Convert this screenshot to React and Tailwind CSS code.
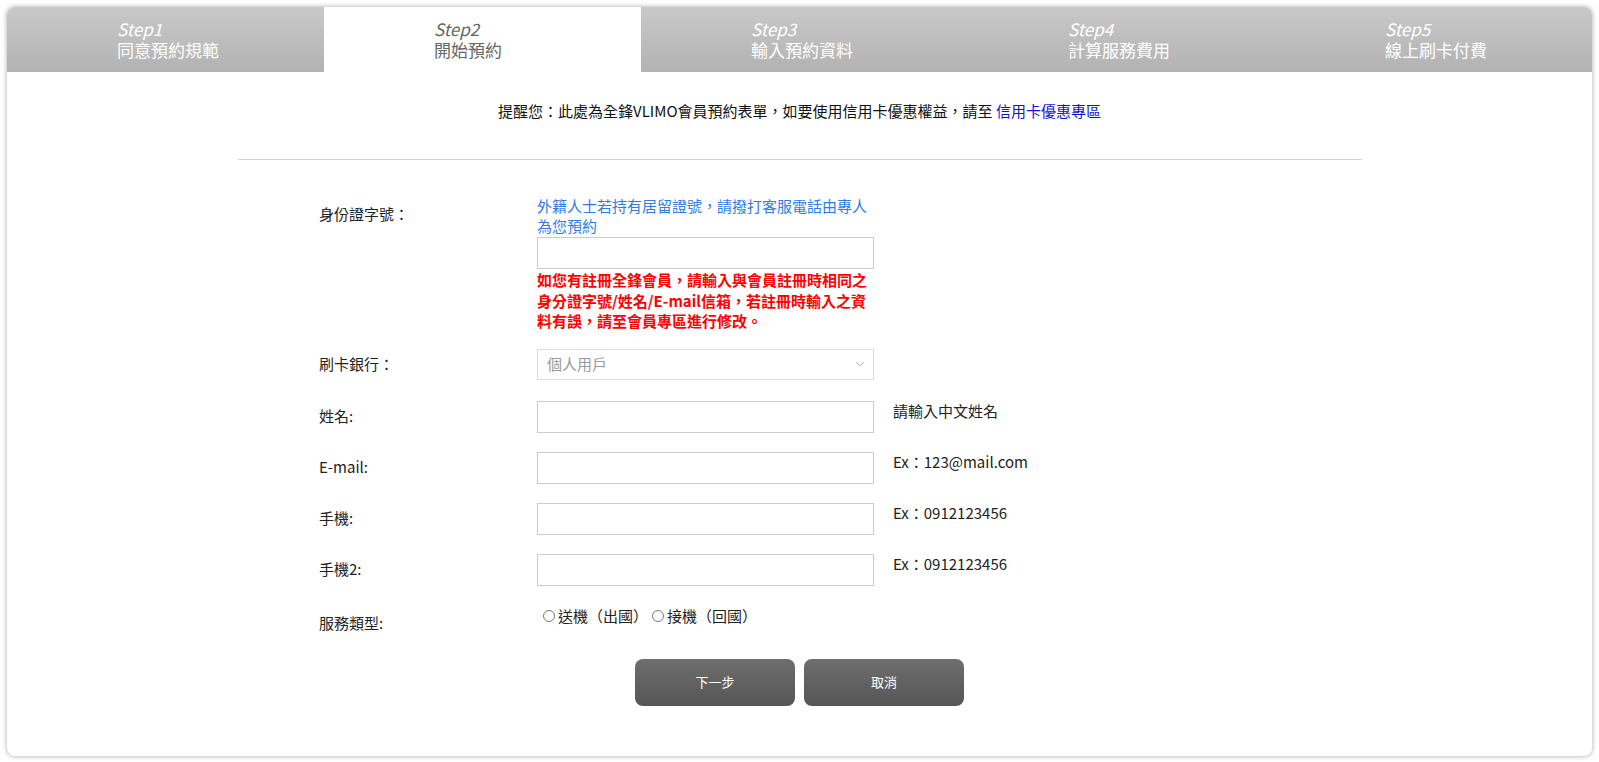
import { ChevronDown } from 'lucide-react';

const font = { fontFamily: '"Noto Sans CJK TC", "Noto Sans", sans-serif' };

const steps = [
  { no: 'Step1', name: '同意預約規範' },
  { no: 'Step2', name: '開始預約', active: true },
  { no: 'Step3', name: '輸入預約資料' },
  { no: 'Step4', name: '計算服務費用' },
  { no: 'Step5', name: '線上刷卡付費' },
];

function StepTabs() {
  return (
    <div className="flex h-[65px]">
      {steps.map((s) => (
        <div
          key={s.no}
          className={
            s.active
              ? 'flex-1 flex flex-col justify-center pl-[110px] bg-white text-[#666]'
              : 'flex-1 flex flex-col justify-center pl-[110px] bg-gradient-to-b from-[#c9c9c9] to-[#b2b2b2] text-white'
          }
        >
          <span className="italic text-[17px] leading-[20px]">{s.no}</span>
          <span className="text-[17px] leading-[21px]">{s.name}</span>
        </div>
      ))}
    </div>
  );
}

function TextInput() {
  return <div className="w-[337px] h-[32px] border border-[#cccccc] bg-white" />;
}

function Row({ label, children, hint }) {
  return (
    <div className="flex items-start">
      <div className="w-[218px] h-[32px] flex items-center text-[15px] text-[#222]">{label}</div>
      {children}
      {hint && <div className="pl-[19px] text-[15px] leading-[20px] text-[#222]">{hint}</div>}
    </div>
  );
}

function Radio({ label }) {
  return (
    <label className="flex items-center gap-[3px]">
      <span className="w-[12px] h-[12px] rounded-full border border-[#777] bg-white" />
      <span>{label}</span>
    </label>
  );
}

export default function App() {
  return (
    <div className="min-h-screen bg-white p-[7px]" style={font}>
      <div className="h-[749px] rounded-[8px] overflow-hidden bg-white shadow-[0_0_5px_rgba(0,0,0,0.35)]">
        <StepTabs />

        <p className="mt-[29px] text-center text-[15px] leading-[20px] text-[#111]">
          提醒您：此處為全鋒VLIMO會員預約表單，如要使用信用卡優惠權益，請至{' '}
          <a className="text-[#1212d6]">信用卡優惠專區</a>
        </p>

        <div className="mx-auto mt-[38px] w-[1124px] border-t border-[#d0d0d0]" />

        <div className="ml-[312px] mt-[36px] flex flex-col">
          {/* 身份證字號 */}
          <div className="flex items-start">
            <div className="w-[218px] pt-[8px] text-[15px] leading-[20px] text-[#222]">身份證字號：</div>
            <div className="w-[337px] flex flex-col">
              <p className="text-[15px] leading-[20px] text-[#2f7de1]">
                外籍人士若持有居留證號，請撥打客服電話由專人為您預約
              </p>
              <div className="mt-[1px]">
                <TextInput />
              </div>
              <p className="mt-[1px] text-[15px] leading-[20.5px] font-bold text-[#ff0000]">
                如您有註冊全鋒會員，請輸入與會員註冊時相同之身分證字號/姓名/E-mail信箱，若註冊時輸入之資料有誤，請至會員專區進行修改。
              </p>
            </div>
          </div>

          {/* 刷卡銀行 */}
          <div className="mt-[17px] flex items-center">
            <div className="w-[218px] text-[15px] text-[#222]">刷卡銀行：</div>
            <div className="w-[337px] h-[31px] border border-[#dddddd] bg-white flex items-center justify-between pl-[9px] pr-[6px] text-[15px] text-[#999]">
              <span>個人用戶</span>
              <ChevronDown size={14} strokeWidth={1.5} className="text-[#999]" />
            </div>
          </div>

          <div className="mt-[21px] flex flex-col gap-[19px]">
            <Row label="姓名:" hint="請輸入中文姓名">
              <TextInput />
            </Row>
            <Row label="E-mail:" hint="Ex：123@mail.com">
              <TextInput />
            </Row>
            <Row label="手機:" hint="Ex：0912123456">
              <TextInput />
            </Row>
            <Row label="手機2:" hint="Ex：0912123456">
              <TextInput />
            </Row>
          </div>

          {/* 服務類型 */}
          <div className="mt-[20px] flex items-start">
            <div className="w-[218px] pt-[7px] text-[15px] leading-[20px] text-[#222]">服務類型:</div>
            <div className="flex items-center gap-[4px] pl-[6px] text-[15px] leading-[20px] text-[#222]">
              <Radio label="送機（出國）" />
              <Radio label="接機（回國）" />
            </div>
          </div>
        </div>

        <div className="mt-[26px] flex justify-center gap-[9px]">
          <button className="w-[160px] h-[47px] rounded-[8px] bg-gradient-to-b from-[#6e6e6e] to-[#565656] text-white text-[13px]">
            下一步
          </button>
          <button className="w-[160px] h-[47px] rounded-[8px] bg-gradient-to-b from-[#6e6e6e] to-[#565656] text-white text-[13px]">
            取消
          </button>
        </div>
      </div>
    </div>
  );
}
